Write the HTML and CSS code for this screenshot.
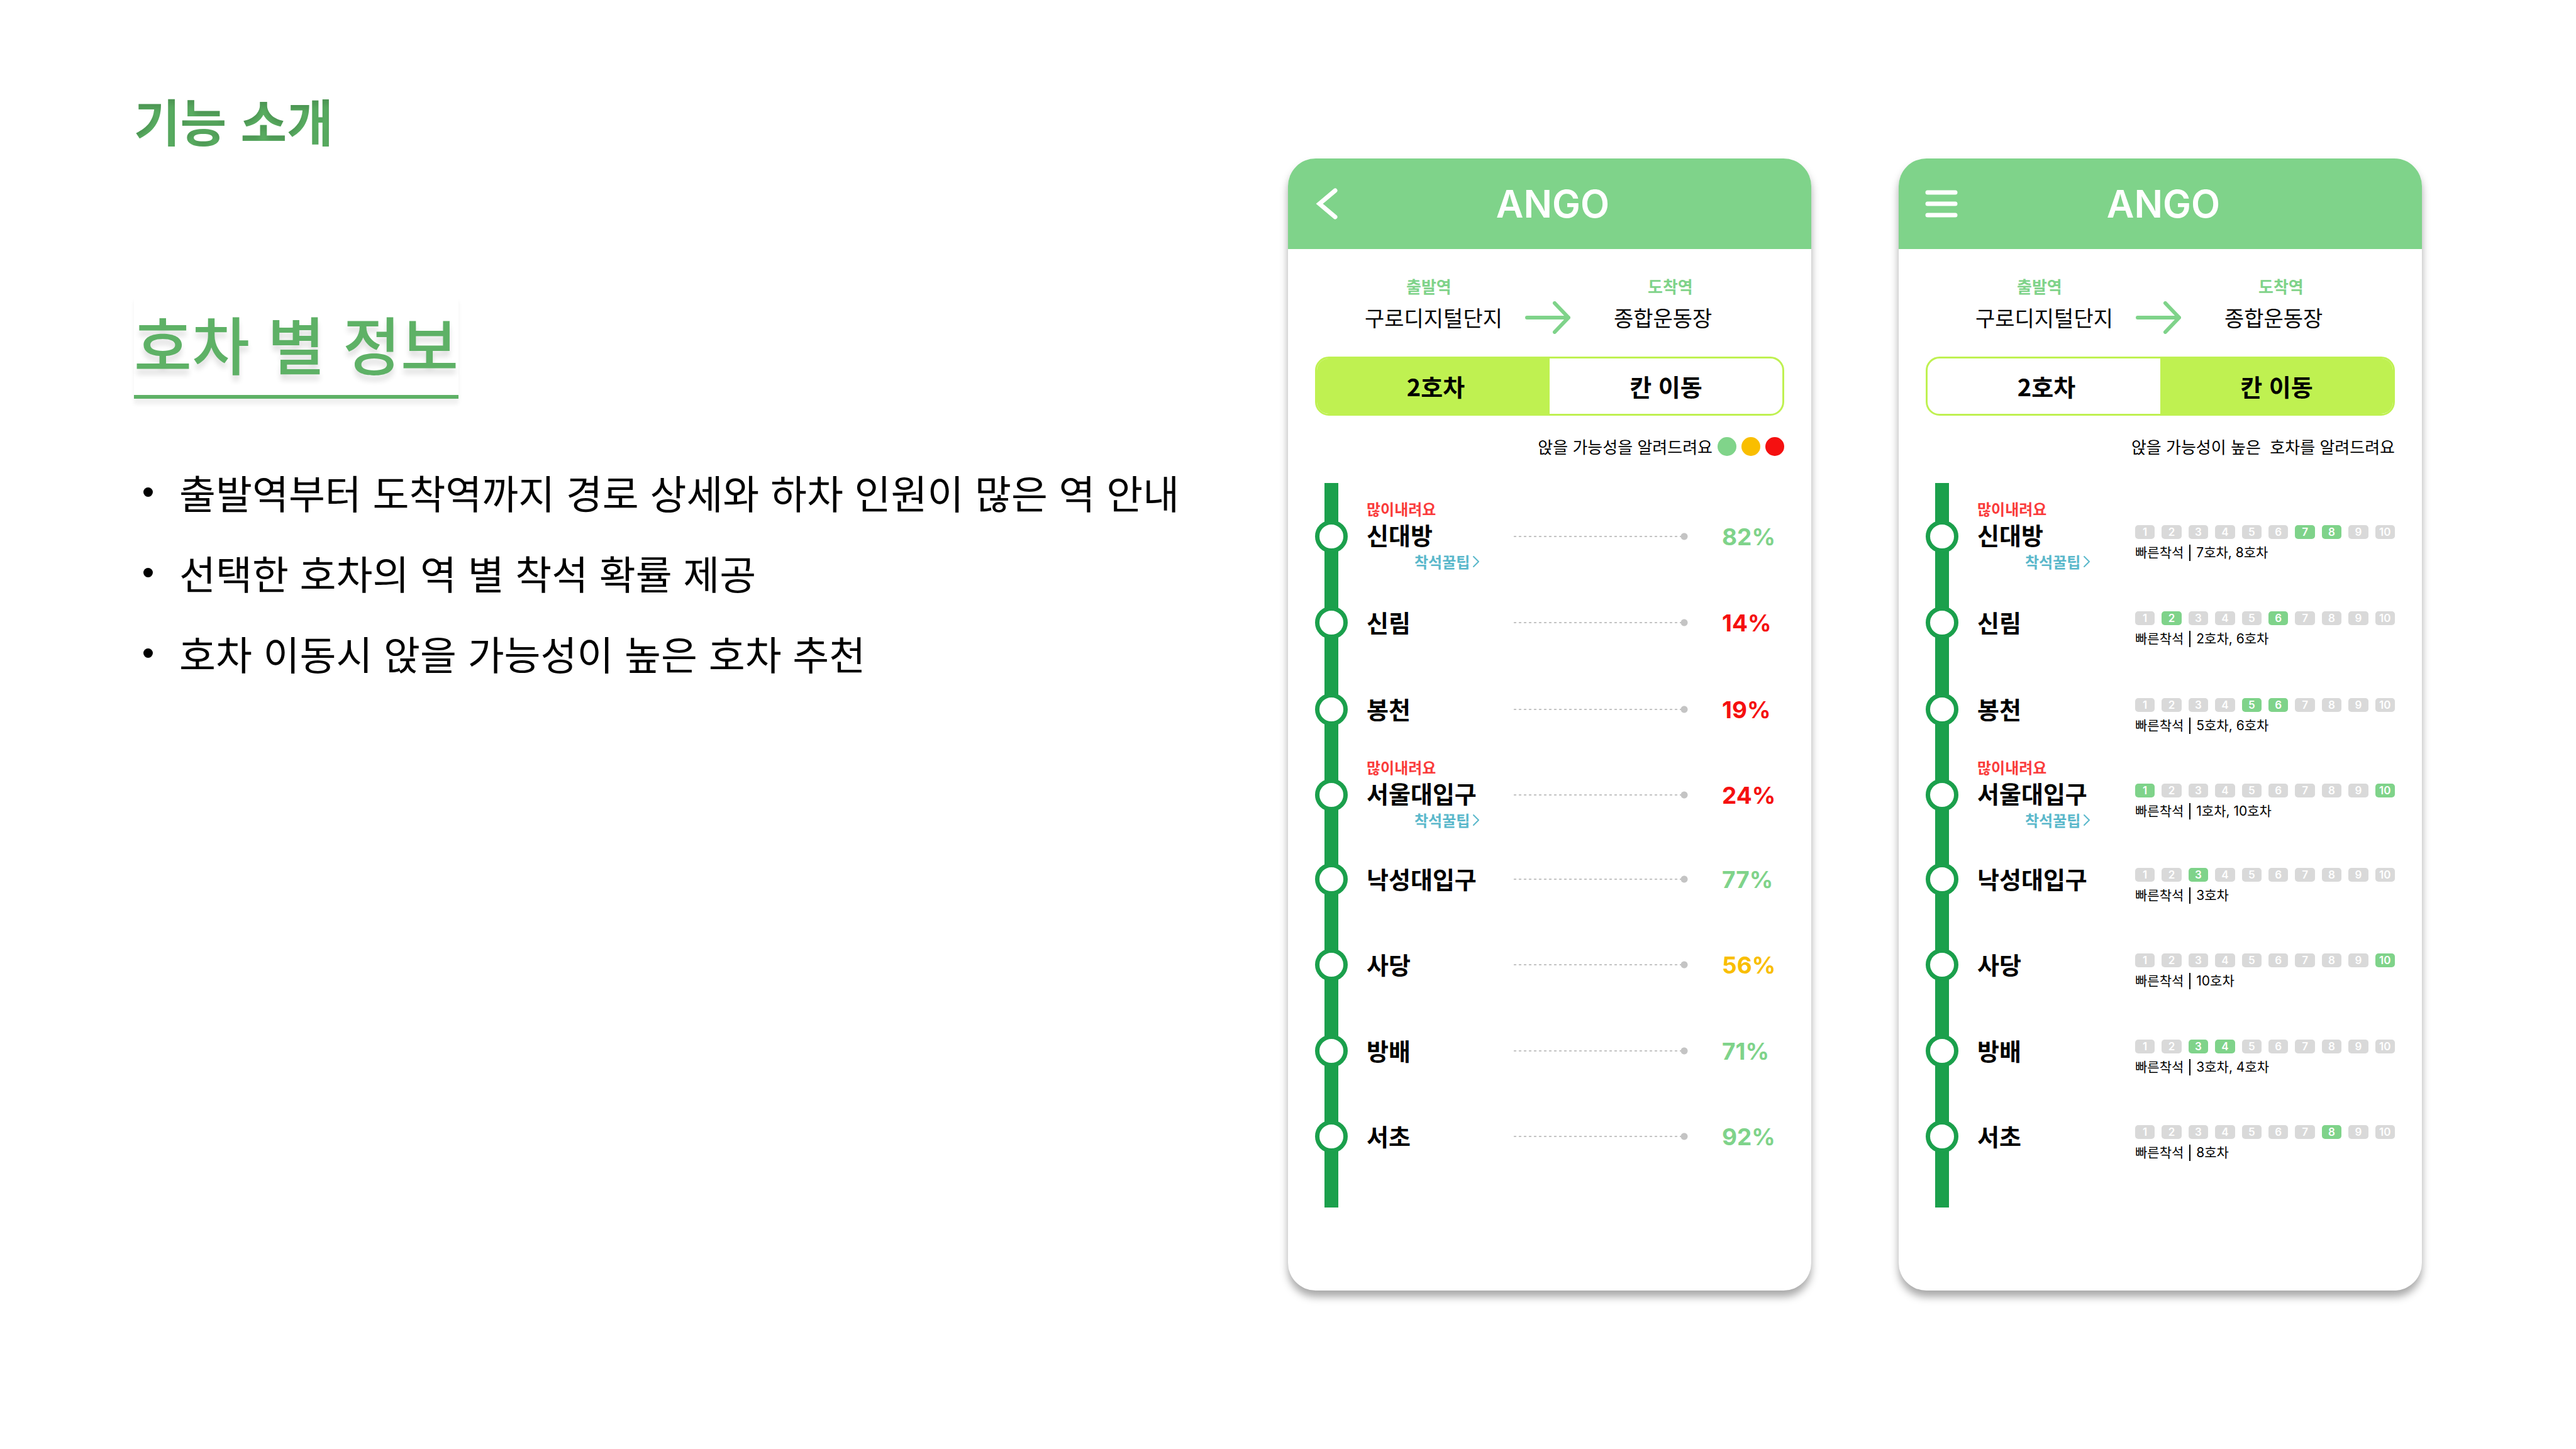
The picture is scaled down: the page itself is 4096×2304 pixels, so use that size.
FILE: index.html
```html
<!DOCTYPE html>
<html lang="ko">
<head>
<meta charset="utf-8">
<title>기능 소개</title>
<link rel="stylesheet" href="styles.css">
</head>
<body>
<svg class="defs" aria-hidden="true">
  <filter id="inner-shade">
    <feOffset in="SourceAlpha" dy="8" result="moved"/>
    <feGaussianBlur in="moved" stdDeviation="4" result="soft"/>
    <feComposite in="SourceAlpha" in2="soft" operator="out" result="edge"/>
    <feFlood flood-color="#000" flood-opacity="0.3"/>
    <feComposite in2="edge" operator="in" result="shade"/>
    <feMerge><feMergeNode in="SourceGraphic"/><feMergeNode in="shade"/></feMerge>
  </filter>
  <symbol id="arrow" viewBox="0 0 72 52"><path d="M3 26H69M47 3L69 26L47 49" fill="none" stroke="currentColor" stroke-width="6" stroke-linecap="round" stroke-linejoin="round"/></symbol>
  <symbol id="chevron" viewBox="0 0 12 20"><path d="M2 2L10 10L2 18" fill="none" stroke="currentColor" stroke-width="2" stroke-linecap="round" stroke-linejoin="round"/></symbol>
</svg>
<main class="slide">
  <section class="intro">
    <h1 class="title">기능 소개</h1>
    <h2 class="heading">호차 별 정보</h2>
    <ul class="points">
      <li>출발역부터 도착역까지 경로 상세와 하차 인원이 많은 역 안내</li>
      <li>선택한 호차의 역 별 착석 확률 제공</li>
      <li>호차 이동시 앉을 가능성이 높은 호차 추천</li>
    </ul>
  </section>

  <section class="phone">
    <header class="bar">
      <button class="bar-button" type="button" aria-label="뒤로">
        <svg width="38" height="50" viewBox="0 0 38 50"><path d="M33 4L8 25L33 46" fill="none" stroke="#fff" stroke-width="7" stroke-linecap="round" stroke-linejoin="miter"/></svg>
      </button>
      <span class="logo">ANGO</span>
    </header>
    <div class="route">
      <div class="stop"><span class="stop-label">출발역</span><span class="stop-name">구로디지털단지</span></div>
      <svg class="arrow"><use href="#arrow"/></svg>
      <div class="stop stop-end"><span class="stop-label">도착역</span><span class="stop-name">종합운동장</span></div>
    </div>
    <div class="tabs">
      <button class="tab tab-car active" type="button">2호차</button>
      <button class="tab" type="button">칸 이동</button>
    </div>
    <p class="legend"><span>앉을 가능성을 알려드려요</span><i class="dot good"></i><i class="dot mid"></i><i class="dot bad"></i></p>
    <ol class="line">
      <li class="station"><i class="node"></i><div class="label"><span class="busy">많이내려요</span><span class="name">신대방</span><a class="tip" href="#">착석꿀팁<svg class="chevron"><use href="#chevron"/></svg></a></div><i class="leader"></i><b class="rate is-good">82%</b></li>
      <li class="station"><i class="node"></i><div class="label"><span class="name">신림</span></div><i class="leader"></i><b class="rate is-bad">14%</b></li>
      <li class="station"><i class="node"></i><div class="label"><span class="name">봉천</span></div><i class="leader"></i><b class="rate is-bad">19%</b></li>
      <li class="station"><i class="node"></i><div class="label"><span class="busy">많이내려요</span><span class="name">서울대입구</span><a class="tip" href="#">착석꿀팁<svg class="chevron"><use href="#chevron"/></svg></a></div><i class="leader"></i><b class="rate is-bad">24%</b></li>
      <li class="station"><i class="node"></i><div class="label"><span class="name">낙성대입구</span></div><i class="leader"></i><b class="rate is-good">77%</b></li>
      <li class="station"><i class="node"></i><div class="label"><span class="name">사당</span></div><i class="leader"></i><b class="rate is-mid">56%</b></li>
      <li class="station"><i class="node"></i><div class="label"><span class="name">방배</span></div><i class="leader"></i><b class="rate is-good">71%</b></li>
      <li class="station"><i class="node"></i><div class="label"><span class="name">서초</span></div><i class="leader"></i><b class="rate is-good">92%</b></li>
    </ol>
  </section>

  <section class="phone">
    <header class="bar">
      <button class="bar-button" type="button" aria-label="메뉴">
        <svg width="52" height="44" viewBox="0 0 52 44"><path d="M4 4H48M4 22H48M4 40H48" fill="none" stroke="#fff" stroke-width="7" stroke-linecap="round"/></svg>
      </button>
      <span class="logo">ANGO</span>
    </header>
    <div class="route">
      <div class="stop"><span class="stop-label">출발역</span><span class="stop-name">구로디지털단지</span></div>
      <svg class="arrow"><use href="#arrow"/></svg>
      <div class="stop stop-end"><span class="stop-label">도착역</span><span class="stop-name">종합운동장</span></div>
    </div>
    <div class="tabs">
      <button class="tab tab-car" type="button">2호차</button>
      <button class="tab active" type="button">칸 이동</button>
    </div>
    <p class="legend">앉을 가능성이 높은  호차를 알려드려요</p>
    <ol class="line">
      <li class="station"><i class="node"></i><div class="label"><span class="busy">많이내려요</span><span class="name">신대방</span><a class="tip" href="#">착석꿀팁<svg class="chevron"><use href="#chevron"/></svg></a></div><div class="cars"><div class="chips"><i>1</i><i>2</i><i>3</i><i>4</i><i>5</i><i>6</i><i class="on">7</i><i class="on">8</i><i>9</i><i>10</i></div><p class="fast"><span>빠른착석</span><span class="fast-cars">7호차, 8호차</span></p></div></li>
      <li class="station"><i class="node"></i><div class="label"><span class="name">신림</span></div><div class="cars"><div class="chips"><i>1</i><i class="on">2</i><i>3</i><i>4</i><i>5</i><i class="on">6</i><i>7</i><i>8</i><i>9</i><i>10</i></div><p class="fast"><span>빠른착석</span><span class="fast-cars">2호차, 6호차</span></p></div></li>
      <li class="station"><i class="node"></i><div class="label"><span class="name">봉천</span></div><div class="cars"><div class="chips"><i>1</i><i>2</i><i>3</i><i>4</i><i class="on">5</i><i class="on">6</i><i>7</i><i>8</i><i>9</i><i>10</i></div><p class="fast"><span>빠른착석</span><span class="fast-cars">5호차, 6호차</span></p></div></li>
      <li class="station"><i class="node"></i><div class="label"><span class="busy">많이내려요</span><span class="name">서울대입구</span><a class="tip" href="#">착석꿀팁<svg class="chevron"><use href="#chevron"/></svg></a></div><div class="cars"><div class="chips"><i class="on">1</i><i>2</i><i>3</i><i>4</i><i>5</i><i>6</i><i>7</i><i>8</i><i>9</i><i class="on">10</i></div><p class="fast"><span>빠른착석</span><span class="fast-cars">1호차, 10호차</span></p></div></li>
      <li class="station"><i class="node"></i><div class="label"><span class="name">낙성대입구</span></div><div class="cars"><div class="chips"><i>1</i><i>2</i><i class="on">3</i><i>4</i><i>5</i><i>6</i><i>7</i><i>8</i><i>9</i><i>10</i></div><p class="fast"><span>빠른착석</span><span class="fast-cars">3호차</span></p></div></li>
      <li class="station"><i class="node"></i><div class="label"><span class="name">사당</span></div><div class="cars"><div class="chips"><i>1</i><i>2</i><i>3</i><i>4</i><i>5</i><i>6</i><i>7</i><i>8</i><i>9</i><i class="on">10</i></div><p class="fast"><span>빠른착석</span><span class="fast-cars">10호차</span></p></div></li>
      <li class="station"><i class="node"></i><div class="label"><span class="name">방배</span></div><div class="cars"><div class="chips"><i>1</i><i>2</i><i class="on">3</i><i class="on">4</i><i>5</i><i>6</i><i>7</i><i>8</i><i>9</i><i>10</i></div><p class="fast"><span>빠른착석</span><span class="fast-cars">3호차, 4호차</span></p></div></li>
      <li class="station"><i class="node"></i><div class="label"><span class="name">서초</span></div><div class="cars"><div class="chips"><i>1</i><i>2</i><i>3</i><i>4</i><i>5</i><i>6</i><i>7</i><i class="on">8</i><i>9</i><i>10</i></div><p class="fast"><span>빠른착석</span><span class="fast-cars">8호차</span></p></div></li>
    </ol>
  </section>
</main>
</body>
</html>
```
FILE: styles.css
```css
* { box-sizing: border-box; }

body {
  margin: 0;
  background: #fff;
  color: #000;
  font-family: "Noto Sans CJK KR", sans-serif;
}

h1, h2, p, ul, ol { margin: 0; padding: 0; }
ul, ol { list-style: none; }
i { font-style: normal; }
button { font: inherit; color: inherit; border: 0; padding: 0; background: none; }
a { text-decoration: none; }
.defs { position: absolute; width: 0; height: 0; }

.slide {
  display: grid;
  grid-template-columns: 1fr 832px 832px;
  column-gap: 139px;
  align-items: start;
  min-height: 100vh;
  padding: 134px 245px 100px 213px;
}

/* Left text column */
.title {
  color: #5cb064;
  font-size: 80px;
  font-weight: 700;
  line-height: 112px;
  filter: url(#inner-shade);
}
.heading {
  width: max-content;
  margin-top: 224px;
  padding-bottom: 8px;
  border-bottom: 6px solid #5eb166;
  color: #5eb166;
  font-size: 100px;
  font-weight: 500;
  line-height: 150px;
  text-shadow: 0 9px 9px rgba(0, 0, 0, .12);
  box-shadow: 0 9px 6px rgba(0, 0, 0, .06);
}
.points { margin-top: 84px; padding-left: 15px; }
.points li {
  display: flex;
  align-items: center;
  gap: 42px;
  font-size: 63px;
  line-height: 128px;
  white-space: nowrap;
}
.points li::before {
  content: "";
  width: 15px;
  height: 15px;
  border-radius: 50%;
  background: #000;
}

/* Phone card */
.phone {
  margin-top: 118px;
  padding-bottom: 132px;
  border-radius: 44px;
  background: #fff;
  box-shadow: 0 10px 13px rgba(0, 0, 0, .34);
}
.bar {
  display: grid;
  grid-template-columns: 60px 1fr 60px;
  align-items: center;
  height: 144px;
  padding: 0 42px;
  border-radius: 44px 44px 0 0;
  background: #7fd38a;
}
.bar-button { display: flex; align-items: center; }
.logo {
  padding-left: 10px;
  color: #fff;
  font-family: Inter, sans-serif;
  font-size: 60px;
  font-weight: 600;
  text-align: center;
}

.route {
  display: flex;
  align-items: flex-end;
  gap: 36px;
  height: 139px;
  padding-left: 122px;
}
.stop { display: flex; flex-direction: column; }
.stop-label {
  padding-left: 66px;
  color: #7fd38a;
  font-size: 26px;
  font-weight: 700;
  line-height: 40px;
}
.stop-end { padding-left: 33px; }
.stop-end .stop-label { padding-left: 54px; }
.stop-name { font-size: 34px; line-height: 60px; }
.arrow { width: 72px; height: 52px; margin-bottom: 4px; color: #7fd38a; }

.tabs {
  display: grid;
  grid-template-columns: 1fr 1fr;
  height: 94px;
  margin: 32px 43px 0;
  overflow: hidden;
  border: 3px solid #bff151;
  border-radius: 22px;
}
.tab { padding-bottom: 2px; font-size: 38px; font-weight: 700; }
.tab-car { padding-left: 8px; }
.active { background: #bff151; }

.legend {
  display: flex;
  align-items: center;
  justify-content: flex-end;
  gap: 8px;
  margin: 29px 43px 0;
  font-size: 26px;
  line-height: 40px;
  white-space: pre;
}
.dot { width: 30px; height: 30px; border-radius: 50%; }
.good { background: #80d48a; }
.mid { background: #f9be00; }
.bad { background: #f51010; }

/* Line diagram: a green track with a node at each station */
.line {
  display: grid;
  grid-template-rows: 136px 138px 138px 134px 134px 138px 136px 136px;
  margin: 38px 43px 0;
  padding: 17px 0 45px;
  background: linear-gradient(#1ba04c, #1ba04c) 15px 0 / 22px 100% no-repeat;
}
.station {
  display: grid;
  grid-template-columns: 52px 264px 1fr auto;
  align-items: center;
}
.node {
  width: 52px;
  height: 52px;
  border: 7px solid #1ba04c;
  border-radius: 50%;
  background: #fff;
}
.label { display: flex; flex-direction: column; padding: 0 0 3px 30px; }
.busy { color: #fa3b3b; font-size: 24px; font-weight: 700; line-height: 28px; }
.name { font-size: 38px; font-weight: 700; line-height: 54px; }
.tip {
  display: flex;
  align-items: center;
  gap: 4px;
  padding-left: 76px;
  color: #5ab8cb;
  font-size: 24px;
  font-weight: 700;
  line-height: 32px;
}
.chevron { width: 12px; height: 20px; }

.leader {
  height: 12px;
  background:
    radial-gradient(circle at 6px 6px, #c4c4c4 5px, transparent 6px) right / 12px 12px no-repeat,
    repeating-linear-gradient(90deg, #c4c4c4 0 4px, transparent 4px 8px) left / 100% 2px no-repeat;
}
.rate {
  width: 153px;
  padding-left: 54px;
  font-family: Inter, sans-serif;
  font-size: 37px;
  font-weight: 700;
}
.is-good { color: #7fd38a; }
.is-mid { color: #f9be00; }
.is-bad { color: #f51010; }

.cars { grid-column: 3 / 5; padding: 20px 0 0 17px; }
.chips { display: grid; grid-template-columns: repeat(10, 1fr); gap: 11px; }
.chips i {
  height: 22px;
  border-radius: 5px;
  background: #d9d9d9;
  color: #fff;
  font-family: Inter, sans-serif;
  font-size: 17px;
  font-weight: 600;
  line-height: 22px;
  text-align: center;
}
.chips .on { background: #7fd38a; }
.fast {
  display: flex;
  align-items: center;
  gap: 9px;
  padding-top: 9px;
  font-family: Inter, "Noto Sans CJK KR", sans-serif;
  font-size: 21px;
  line-height: 26px;
}
.fast-cars { padding-left: 9px; border-left: 2px solid #000; }
```
